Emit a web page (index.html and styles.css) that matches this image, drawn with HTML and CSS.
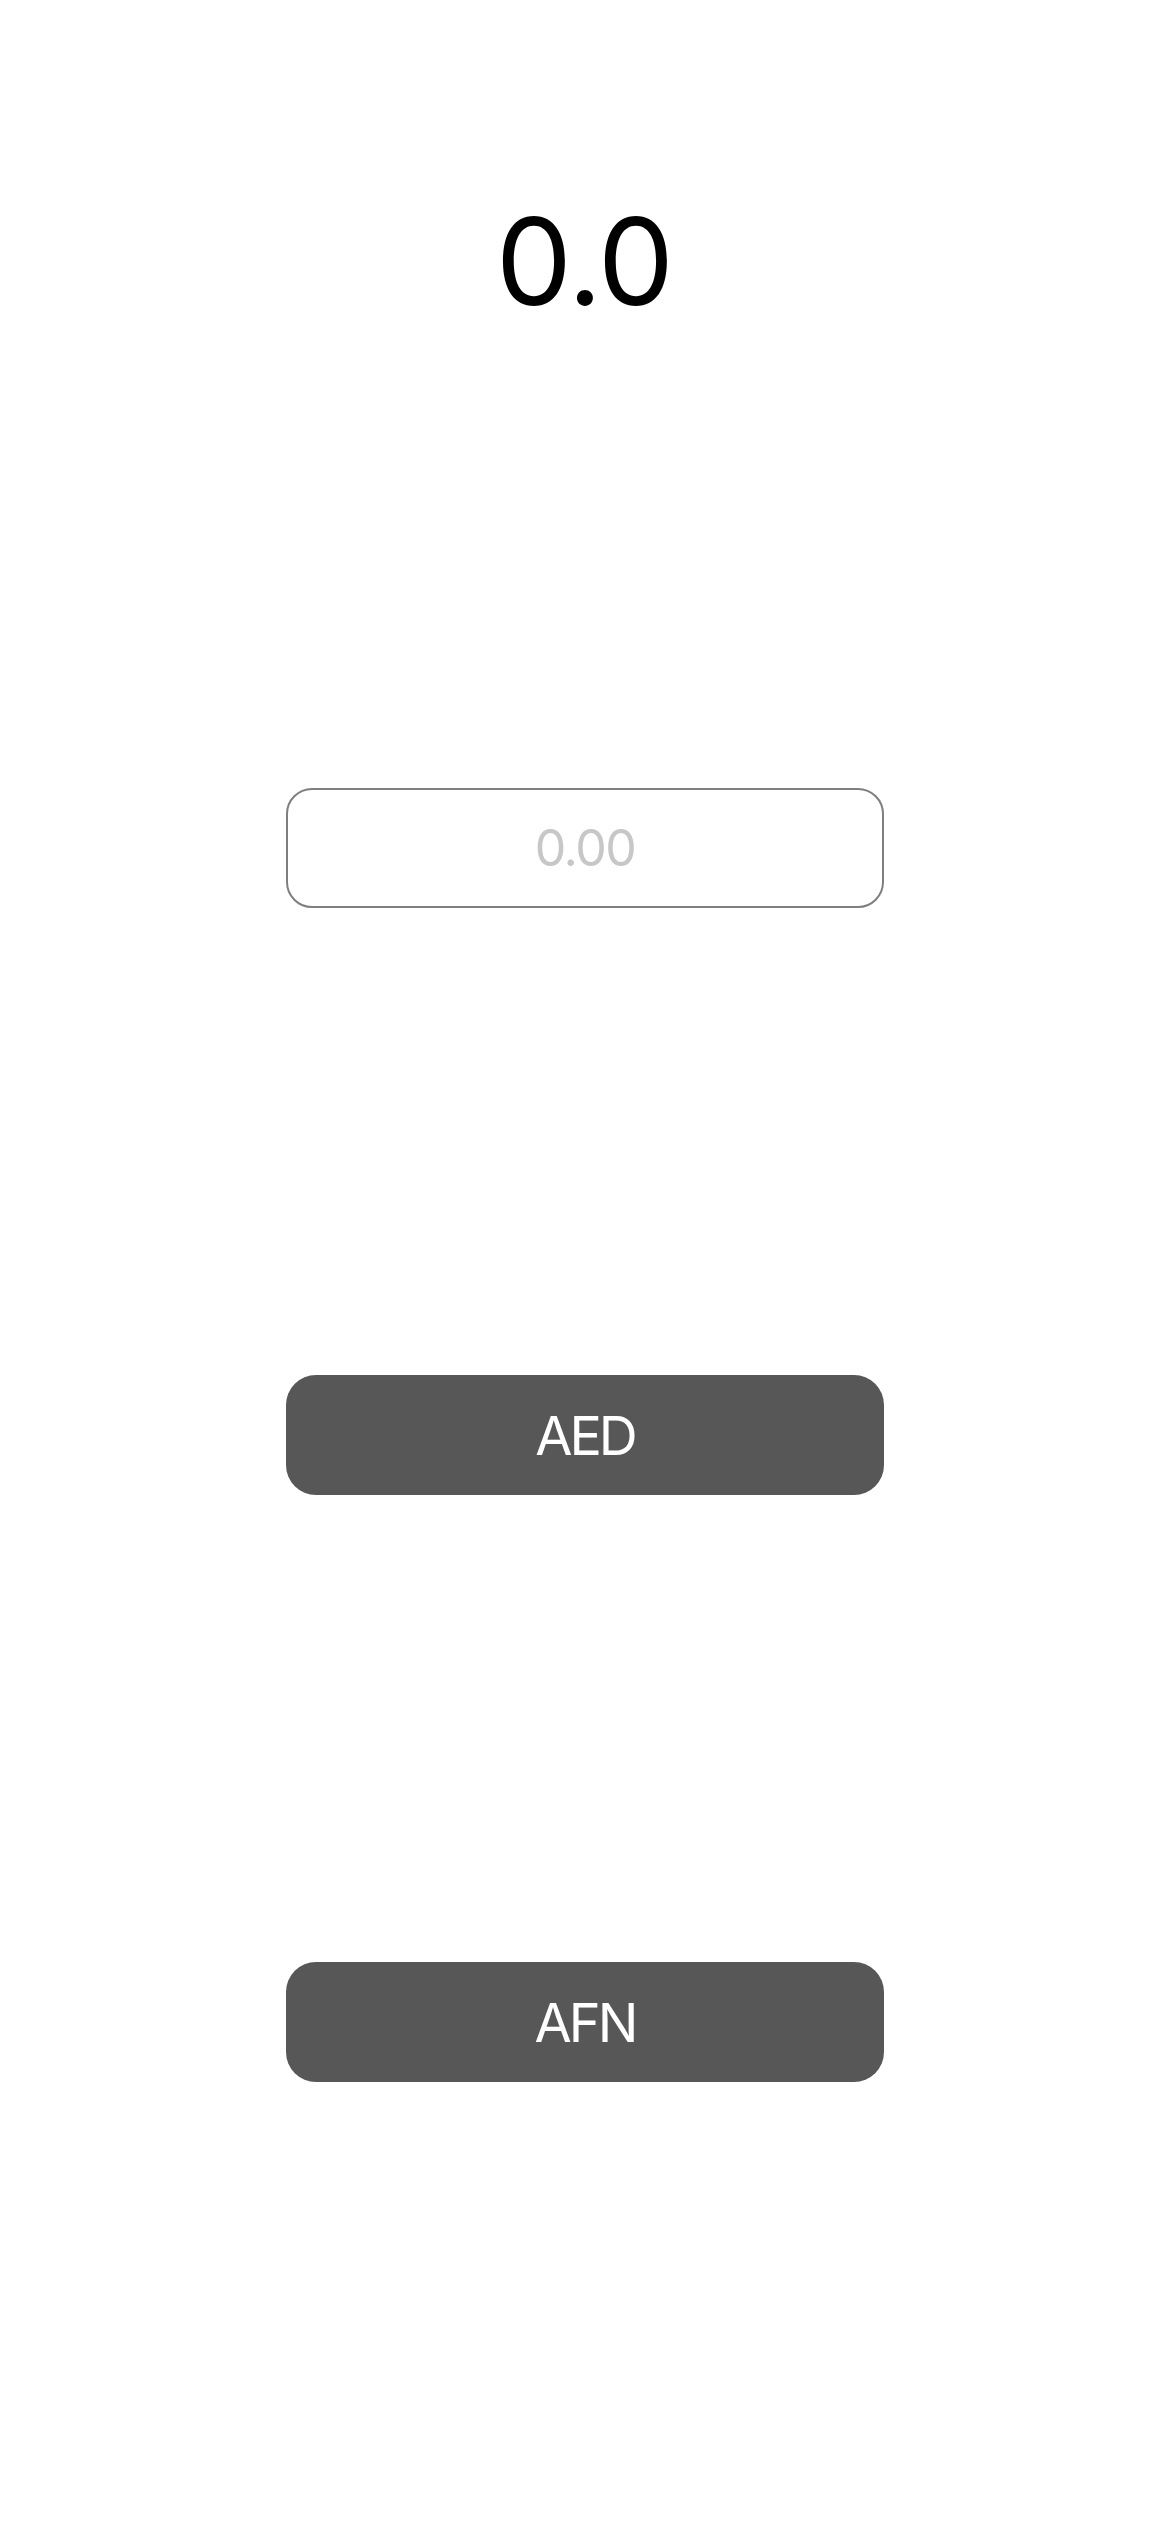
FILE: index.html
```html
<!DOCTYPE html>
<html>
<head>
<meta charset="utf-8">
<link rel="stylesheet" href="styles.css">
</head>
<body>
<main class="screen">
  <div class="result">0.0</div>
  <input class="amount" type="text" placeholder="0.00">
  <button class="currency">AED</button>
  <button class="currency">AFN</button>
</main>
</body>
</html>
```
FILE: styles.css
```css
html, body {
  margin: 0;
  padding: 0;
  background: #ffffff;
}
body {
  font-family: Inter, "Noto Sans", sans-serif;
}
.screen {
  width: 1170px;
  height: 2532px;
  display: flex;
  flex-direction: column;
  align-items: center;
  padding-top: 201px;
  gap: 467px;
  box-sizing: border-box;
}
.result {
  height: 120px;
  line-height: 120px;
  font-size: 121px;
  letter-spacing: -1.5px;
  text-indent: -1.5px;
  color: #000;
  font-weight: 400;
}
.amount {
  width: 598px;
  height: 120px;
  box-sizing: border-box;
  border: 2px solid #7f7f7f;
  border-radius: 26px;
  text-align: center;
  font-family: Inter, "Noto Sans", sans-serif;
  font-size: 50px;
  letter-spacing: -1.5px;
  color: #000;
  outline: none;
  padding: 0;
  background: #fff;
}
.amount::placeholder {
  color: #c7c7c7;
}
.currency {
  width: 598px;
  height: 120px;
  box-sizing: border-box;
  border: none;
  border-radius: 30px;
  background: #575757;
  color: #ffffff;
  font-family: Inter, "Noto Sans", sans-serif;
  font-size: 54px;
  letter-spacing: -3px;
  padding: 0;
}
```
